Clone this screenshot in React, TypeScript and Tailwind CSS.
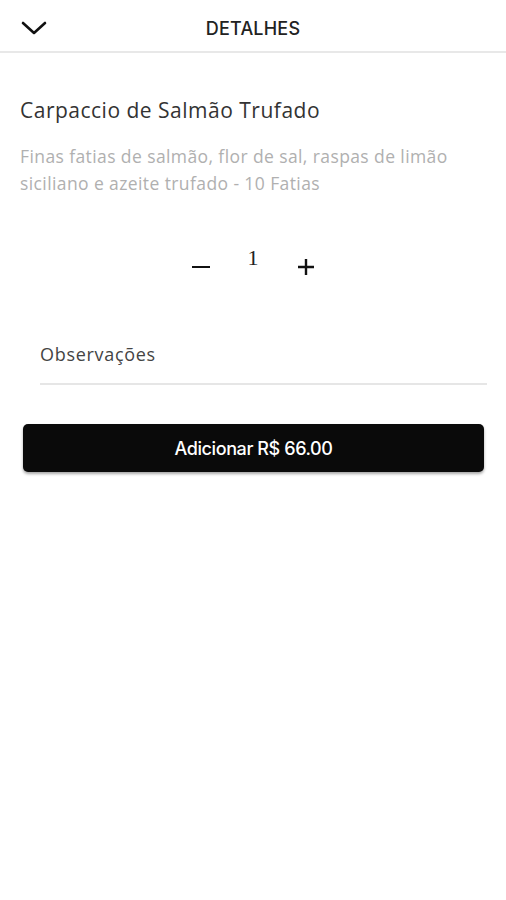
import React from "react";

export default function App() {
  return (
    <div className="w-[506px] h-[900px] bg-white" style={{ fontFamily: "'Open Sans', 'Noto Sans', sans-serif" }}>
      <div className="relative h-[53px] border-b-2 border-[#e8e8e8] flex items-center justify-center">
        <svg className="absolute left-[21px] top-[20px]" width="26" height="16" viewBox="0 0 26 16">
          <path d="M2 3 L13 13 L24 3" fill="none" stroke="#111" strokeWidth="2.6" strokeLinecap="round" strokeLinejoin="round" />
        </svg>
        <span className="text-[18px] text-[#222] tracking-[0.2px] pt-[5px]" style={{ fontFamily: "Inter, sans-serif", fontWeight: 500 }}>DETALHES</span>
      </div>
      <div className="px-[20px] pt-[43px]">
        <h1 className="text-[21px] text-[#333] leading-[28px] tracking-[0.5px]">Carpaccio de Salmão Trufado</h1>
        <p className="mt-[19px] text-[17.5px] leading-[27px] text-[#b0b0b0] tracking-[0.4px]">
          Finas fatias de salmão, flor de sal, raspas de limão siciliano e azeite trufado - 10 Fatias
        </p>
      </div>
      <div className="mt-[44px] flex items-center justify-center gap-[38px] h-[40px]">
        <span className="w-[18px] h-[2.5px] bg-[#111] mt-[12px]" />
        <span className="text-[22px] text-[#222] leading-none mb-[6px]" style={{ fontFamily: "'Liberation Serif', serif" }}>1</span>
        <svg className="mt-[12px]" width="18" height="18" viewBox="0 0 18 18">
          <path d="M9 1 V17 M1 9 H17" stroke="#111" strokeWidth="2.4" />
        </svg>
      </div>
      <div className="ml-[40px] mr-[19px] mt-[61px] border-b-2 border-[#e6e6e6] pb-[16px]">
        <span className="text-[18px] text-[#444] leading-[25px] tracking-[0.7px]">Observações</span>
      </div>
      <div className="px-[23px] pt-[39px]">
        <button className="w-[461px] h-[48px] rounded-[5px] bg-[#0a0a0a] text-white text-[18px] shadow-[0_2px_3px_rgba(0,0,0,0.35)] tracking-[-0.4px]" style={{ fontFamily: "Inter, sans-serif", fontWeight: 500 }}>
          Adicionar R$ 66.00
        </button>
      </div>
    </div>
  );
}
